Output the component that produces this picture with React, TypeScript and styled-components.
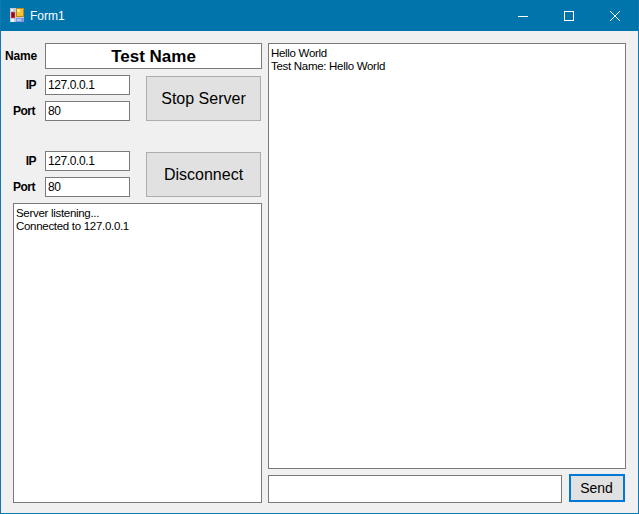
import styled, { createGlobalStyle } from 'styled-components';

const GlobalStyle = createGlobalStyle`
  html, body {
    margin: 0;
    padding: 0;
    background: #f0f0f0;
  }
  * {
    box-sizing: border-box;
  }
`;

const AppIcon = () => (
  <svg width="15" height="15" viewBox="0 0 15 15" shapeRendering="crispEdges">
    <rect x="0" y="0" width="14" height="14" fill="#c3ccd6" />
    <rect x="1" y="1" width="2" height="2" fill="#eef2f6" />
    <rect x="1" y="11" width="3" height="3" fill="#eef2f6" />
    <rect x="1" y="4" width="4" height="6" fill="#d3252b" />
    <rect x="2" y="5" width="2" height="4" fill="#7c1116" />
    <rect x="6" y="0" width="8" height="9" fill="#b98a1c" />
    <rect x="7" y="1" width="6" height="7" fill="#f6c333" />
    <rect x="7" y="1" width="3" height="3" fill="#fbe78c" />
    <rect x="6" y="10" width="8" height="4" fill="#7f9be6" />
    <rect x="7" y="11" width="4" height="2" fill="#b6c6f2" />
  </svg>
);

const Window = styled.div`
  display: flex;
  flex-direction: column;
  width: 639px;
  height: 514px;
  border: 1px solid #0e79b0;
  border-top: 0;
  background: #f0f0f0;
  font-family: 'Liberation Sans', Arial, sans-serif;
  color: #000;
`;

const TitleBar = styled.div`
  display: flex;
  align-items: center;
  height: 31px;
  flex-shrink: 0;
  padding-left: 9px;
  background: #0074ab;
  color: #fff;
`;

const TitleText = styled.span`
  margin-left: 5px;
  font-size: 12px;
`;

const WindowButtons = styled.div`
  display: flex;
  margin-left: auto;
  height: 100%;
`;

const WindowButton = styled.div`
  display: flex;
  align-items: center;
  justify-content: center;
  width: 46px;
  height: 100%;
`;

const Body = styled.div`
  display: flex;
  flex: 1;
  min-height: 0;
  gap: 6px;
  padding: 12px 12px 10px 4px;
`;

const LeftColumn = styled.div`
  display: flex;
  flex-direction: column;
  width: 257px;
  gap: 6px;
`;

const RightColumn = styled.div`
  display: flex;
  flex-direction: column;
  flex: 1;
  min-width: 0;
  gap: 6px;
`;

const NameRow = styled.div`
  display: flex;
  align-items: center;
  height: 26px;
`;

const Label = styled.label<{ $width: number }>`
  display: block;
  width: ${({ $width }) => $width}px;
  font-size: 12px;
  font-weight: bold;
  letter-spacing: -0.5px;
  text-align: right;
  white-space: nowrap;
`;

const NameLabel = styled(Label)`
  letter-spacing: -0.2px;
`;

const NameBox = styled.div`
  display: flex;
  align-items: center;
  justify-content: center;
  flex: 1;
  height: 26px;
  margin-left: 8px;
  padding-top: 1px;
  border: 1px solid #7a7a7a;
  background: #fff;
  font-size: 17px;
  font-weight: bold;
`;

const ConnectionRow = styled.div<{ $spaced?: boolean }>`
  display: flex;
  height: 46px;
  padding-left: 8px;
  margin-top: ${({ $spaced }) => ($spaced ? 24 : 0)}px;
`;

const Fields = styled.div`
  display: flex;
  flex-direction: column;
  gap: 6px;
  width: 117px;
`;

const FieldRow = styled.div`
  display: flex;
  align-items: center;
  height: 20px;
`;

const FieldBox = styled.div`
  display: flex;
  align-items: center;
  width: 85px;
  height: 20px;
  margin-left: auto;
  padding-left: 2px;
  border: 1px solid #7a7a7a;
  background: #fff;
  font-size: 12px;
  letter-spacing: -0.4px;
`;

const ActionButton = styled.div`
  display: flex;
  align-items: center;
  justify-content: center;
  width: 115px;
  height: 45px;
  margin-left: 16px;
  margin-top: 1px;
  border: 1px solid #adadad;
  background: #e1e1e1;
  font-size: 16px;
`;

const LogBox = styled.div<{ $inset?: boolean }>`
  flex: 1;
  min-height: 0;
  margin-left: ${({ $inset }) => ($inset ? 8 : 0)}px;
  padding: 3px 2px;
  border: 1px solid #7a7a7a;
  background: #fff;
  font-size: 11.5px;
  letter-spacing: -0.3px;
  line-height: 13px;
`;

const SendRow = styled.div`
  display: flex;
  height: 28px;
`;

const MessageInput = styled.div`
  width: 294px;
  height: 28px;
  border: 1px solid #7a7a7a;
  background: #fff;
`;

const SendButton = styled.div`
  display: flex;
  align-items: center;
  justify-content: center;
  width: 56px;
  height: 28px;
  margin-left: 7px;
  margin-top: -1px;
  padding-right: 1px;
  border: 2px solid #0078d7;
  background: #e1e1e1;
  font-size: 14px;
`;

const Connection = ({ action, spaced }: { action: string; spaced?: boolean }) => (
  <ConnectionRow $spaced={spaced}>
    <Fields>
      <FieldRow>
        <Label $width={23}>IP</Label>
        <FieldBox>127.0.0.1</FieldBox>
      </FieldRow>
      <FieldRow>
        <Label $width={22}>Port</Label>
        <FieldBox>80</FieldBox>
      </FieldRow>
    </Fields>
    <ActionButton>{action}</ActionButton>
  </ConnectionRow>
);

const App = () => {
  return (
    <Window>
      <GlobalStyle />
      <TitleBar>
        <AppIcon />
        <TitleText>Form1</TitleText>
        <WindowButtons>
          <WindowButton>
            <svg width="10" height="10" viewBox="0 0 10 10" shapeRendering="crispEdges">
              <rect x="0" y="5" width="10" height="1" fill="#fff" />
            </svg>
          </WindowButton>
          <WindowButton>
            <svg width="10" height="10" viewBox="0 0 10 10" shapeRendering="crispEdges">
              <rect x="0.5" y="0.5" width="9" height="9" fill="none" stroke="#fff" />
            </svg>
          </WindowButton>
          <WindowButton>
            <svg width="10" height="10" viewBox="0 0 10 10">
              <path d="M0 0 L10 10 M10 0 L0 10" stroke="#fff" strokeWidth="1" fill="none" />
            </svg>
          </WindowButton>
        </WindowButtons>
      </TitleBar>
      <Body>
        <LeftColumn>
          <NameRow>
            <NameLabel $width={32}>Name</NameLabel>
            <NameBox>Test Name</NameBox>
          </NameRow>
          <Connection action="Stop Server" />
          <Connection action="Disconnect" spaced />
          <LogBox $inset>
            Server listening...
            <br />
            Connected to 127.0.0.1
          </LogBox>
        </LeftColumn>
        <RightColumn>
          <LogBox>
            Hello World
            <br />
            Test Name: Hello World
          </LogBox>
          <SendRow>
            <MessageInput />
            <SendButton>Send</SendButton>
          </SendRow>
        </RightColumn>
      </Body>
    </Window>
  );
};

export default App;
